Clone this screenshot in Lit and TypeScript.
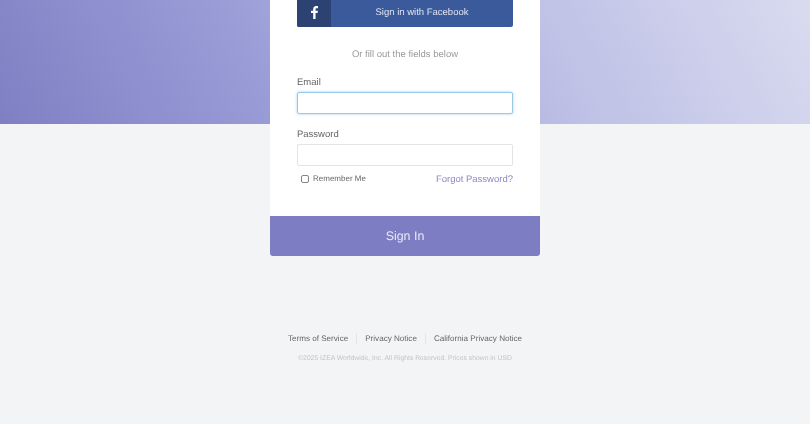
import { LitElement, html, css } from "lit";
import { customElement } from "lit/decorators.js";

@customElement("app-root")
export class AppRoot extends LitElement {
  static styles = css`
    :host {
      display: block;
      font-family: "Liberation Sans", Arial, sans-serif;
      text-rendering: geometricPrecision;
    }
    * { box-sizing: border-box; }
    .page {
      display: grid;
      grid-template-columns: 1fr;
      grid-template-rows: 424px;
      height: 424px;
      overflow: hidden;
      background: #f3f4f6;
    }
    .hero {
      grid-area: 1 / 1;
      height: 124px;
      background: linear-gradient(62deg, #7f80c4 0%, #9a9cd7 32%, #bfc1e6 68%, #d9dbf0 100%);
    }
    .main {
      grid-area: 1 / 1;
      display: flex;
      flex-direction: column;
      align-items: center;
      will-change: opacity;
    }
    .card {
      width: 270px;
      margin-top: -13px;
      background: #fff;
      border-radius: 3px;
      overflow: hidden;
      display: flex;
      flex-direction: column;
    }
    .body {
      display: flex;
      flex-direction: column;
      padding: 0 27px;
    }
    .fb {
      display: flex;
      height: 40px;
      background: #3b5a9b;
      border-radius: 2px;
      overflow: hidden;
      color: #dfe4f0;
      font-size: 9.5px;
      align-items: stretch;
    }
    .fb-icon {
      width: 34px;
      background: #2c4273;
      display: flex;
      align-items: flex-end;
      justify-content: center;
      padding-bottom: 8px;
    }
    .fb-icon svg { display: block; }
    .fb-text {
      flex: 1;
      display: flex;
      align-items: flex-end;
      justify-content: center;
      padding: 0 0 8px 0;
      line-height: 12px;
    }
    .or {
      margin-top: 22px;
      text-align: center;
      font-size: 9.5px;
      line-height: 12px;
      color: #9a9a9a;
    }
    .label {
      font-size: 9.5px;
      line-height: 12px;
      color: #666;
    }
    .email-label { margin-top: 16px; }
    .pass-label { margin-top: 15px; }
    .input {
      display: block;
      width: 100%;
      height: 22px;
      margin-top: 3px;
      background: #fff;
      border: 1px solid #e1e3e6;
      border-radius: 2px;
      padding: 0 6px;
      outline: none;
    }
    .input.focus {
      border-color: #9cc8e8;
      box-shadow: 0 0 3px rgba(102, 175, 233, 0.6);
    }
    .row {
      display: flex;
      justify-content: space-between;
      align-items: center;
      margin-top: 7px;
      height: 13px;
    }
    .remember {
      display: flex;
      align-items: center;
      gap: 4px;
      padding-left: 4px;
      padding-bottom: 2px;
      font-size: 8px;
      line-height: 11px;
      color: #666;
    }
    .check {
      width: 8px;
      height: 8px;
      border: 1px solid #858585;
      border-radius: 2px;
      background: #fff;
    }
    .forgot {
      font-size: 9.5px;
      color: #8b89c6;
      text-decoration: none;
    }
    .submit {
      margin-top: 30px;
      height: 40px;
      background: #7d7dc4;
      color: #e8e8f6;
      font-size: 12.4px;
      display: flex;
      align-items: center;
      justify-content: center;
    }
    .links {
      margin-top: 77px;
      display: flex;
      justify-content: center;
      align-items: center;
      font-size: 8.1px;
      line-height: 11px;
      color: #666;
    }
    .links a {
      color: inherit;
      text-decoration: none;
      padding: 0 8px;
      border-left: 1px solid #e4e5e8;
    }
    .links a:first-child { border-left: 0; }
    .copy {
      margin-top: 10px;
      font-size: 6.8px;
      line-height: 9px;
      color: #c2c4c8;
      text-align: center;
    }
  `;

  render() {
    return html`
      <div class="page">
        <div class="hero"></div>
        <div class="main">
          <div class="card">
            <div class="body">
              <div class="fb">
                <span class="fb-icon">
                  <svg width="7" height="13" viewBox="0 0 8 15" preserveAspectRatio="none">
                    <path fill="#fff" d="M5.2 15V8.2h2.3l.4-2.700H5.200V3.800c0-.8.2-1.300 1.300-1.300H8V.1C7.700.1 6.900 0 6 0 3.900 0 2.500 1.300 2.500 3.500v2H0v2.700h2.500V15z" />
                  </svg>
                </span>
                <span class="fb-text">Sign in with Facebook</span>
              </div>
              <div class="or">Or fill out the fields below</div>
              <label class="label email-label">Email</label>
              <div class="input focus"></div>
              <label class="label pass-label">Password</label>
              <div class="input"></div>
              <div class="row">
                <span class="remember"><span class="check"></span>Remember Me</span>
                <a class="forgot">Forgot Password?</a>
              </div>
            </div>
            <div class="submit">Sign In</div>
          </div>
          <nav class="links">
            <a>Terms of Service</a>
            <a>Privacy Notice</a>
            <a>California Privacy Notice</a>
          </nav>
          <div class="copy">©2025 IZEA Worldwide, Inc. All Rights Reserved. Prices shown in USD</div>
        </div>
      </div>
    `;
  }
}
